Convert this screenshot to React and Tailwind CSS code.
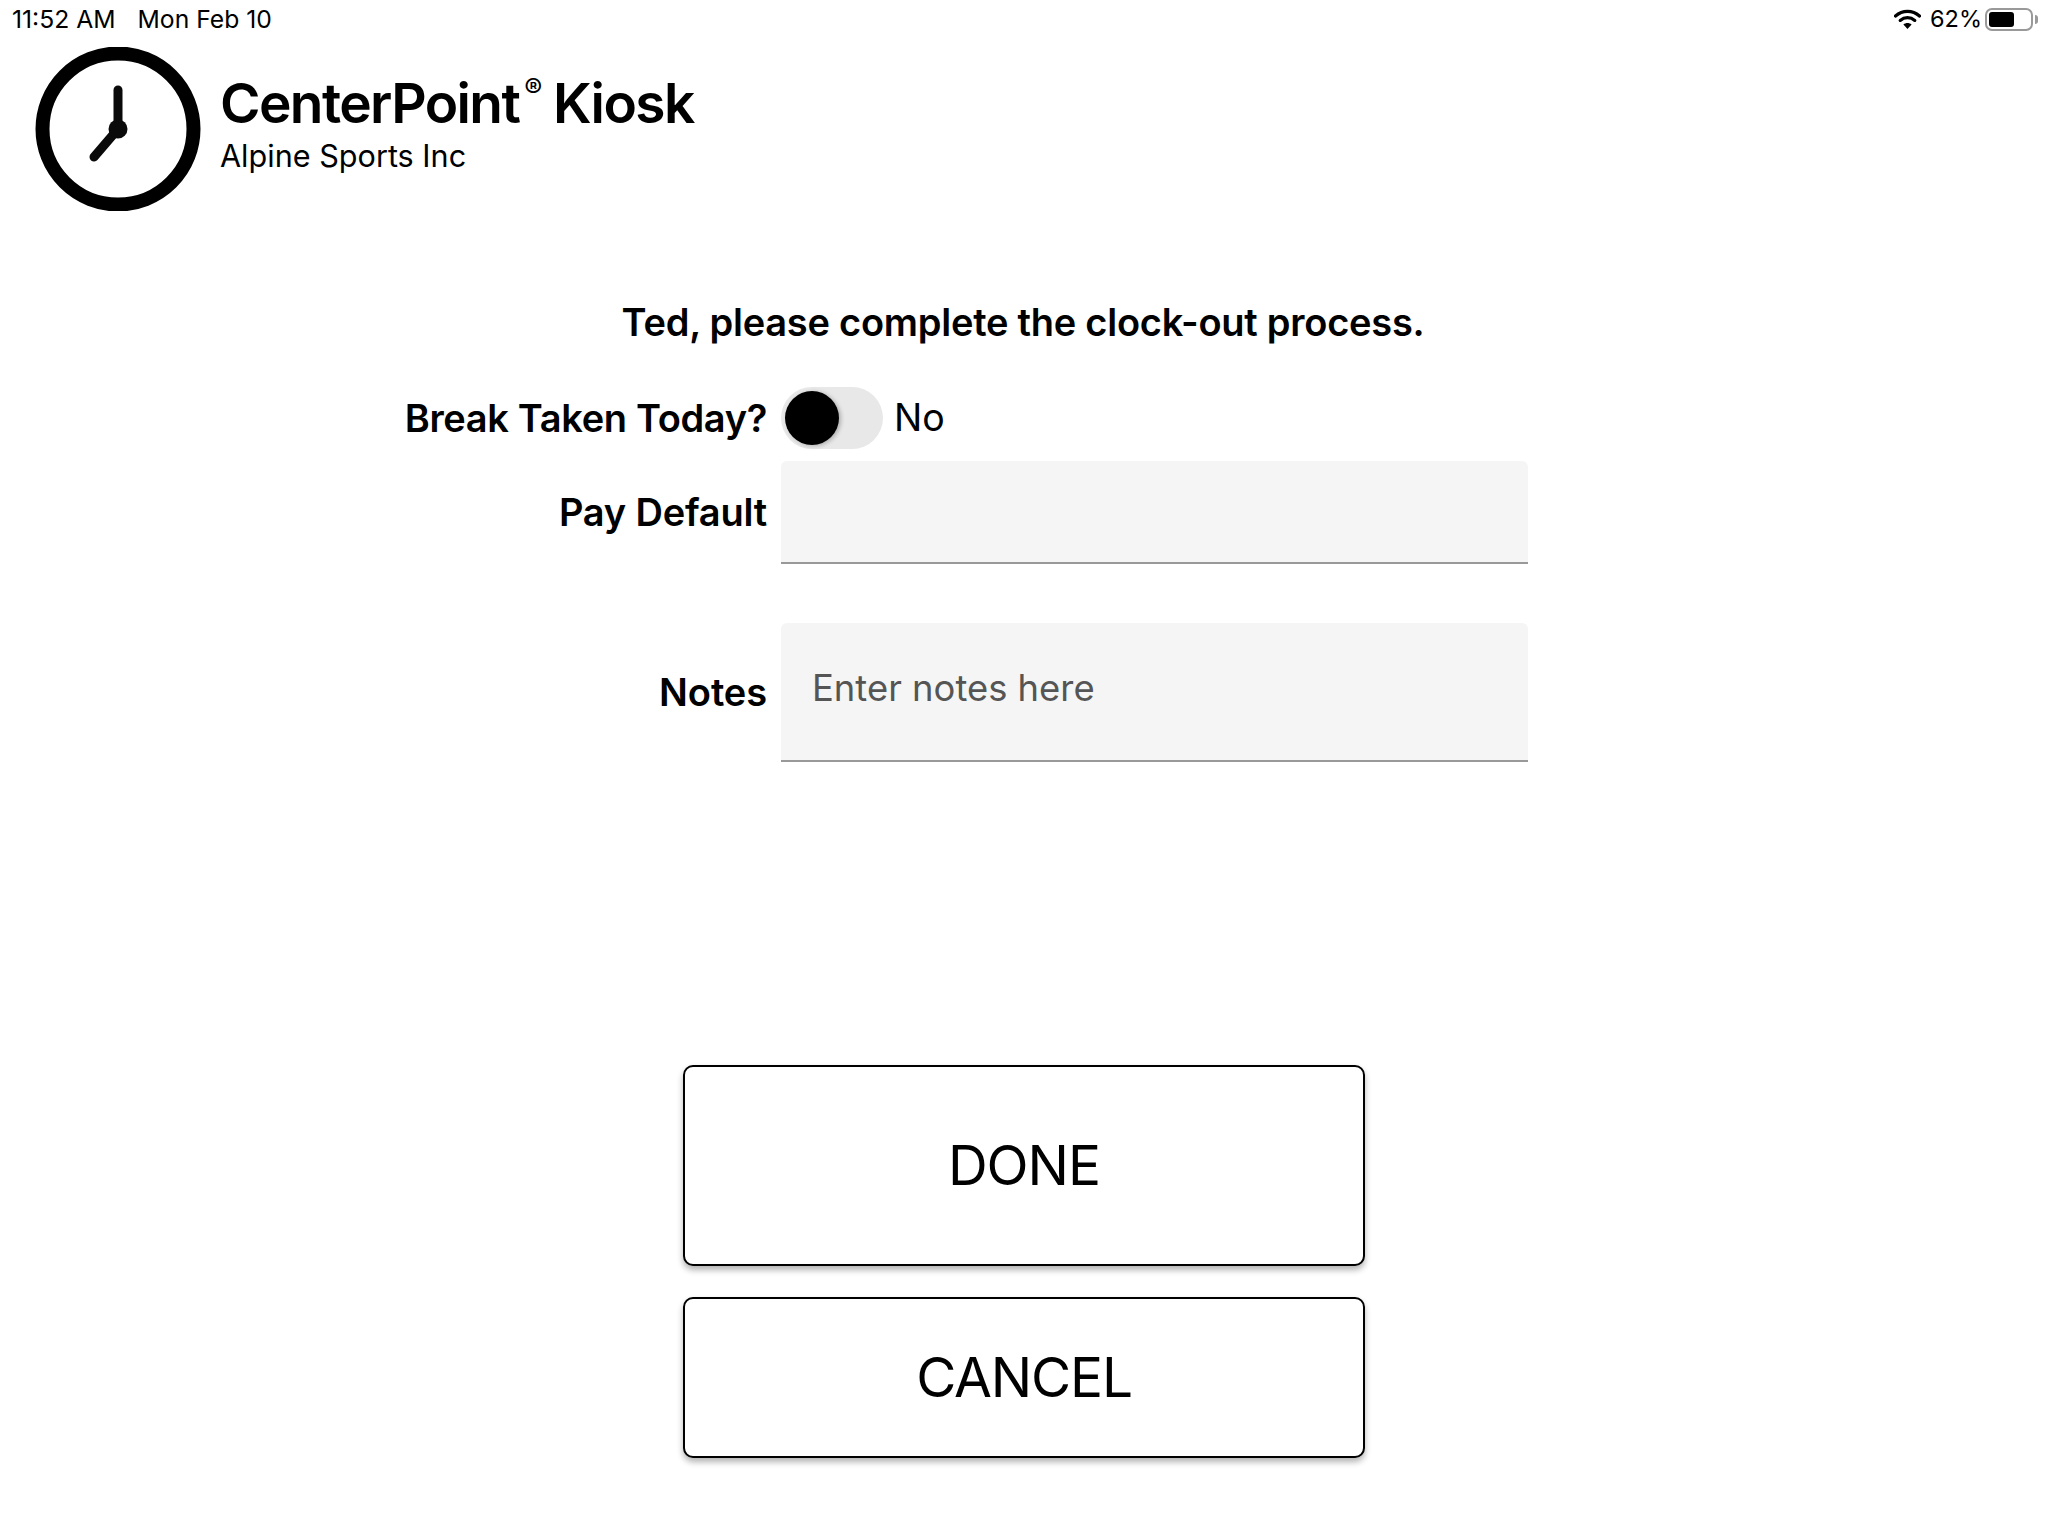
import React from 'react'

function ClockLogo() {
  return (
    <svg className="w-[166px] h-[164px] shrink-0" viewBox="0 0 166 164" fill="none">
      <ellipse cx="83" cy="82" rx="75.5" ry="75.5" stroke="#000" strokeWidth="14" />
      <path d="M83 43V82L59 110" stroke="#0a0a0a" strokeWidth="9" strokeLinecap="round" strokeLinejoin="round" />
      <circle cx="83" cy="82" r="9.5" fill="#0a0a0a" />
    </svg>
  )
}

function WifiIcon() {
  return (
    <svg className="w-[27px] h-[20px]" viewBox="0 0 27 20" fill="none">
      <path d="M1.5 7C8.5 .8 18.5 .8 25.5 7" stroke="#000" strokeWidth="3.2" strokeLinecap="round" />
      <path d="M6.2 11.4C10.5 7.8 16.5 7.8 20.8 11.4" stroke="#000" strokeWidth="3.2" strokeLinecap="round" />
      <path d="M9.4 15.4C11.8 13.4 15.2 13.4 17.6 15.4L13.5 20Z" fill="#000" />
    </svg>
  )
}

function Battery() {
  return (
    <div className="flex items-center gap-[2px]">
      <div className="w-[48px] h-[23px] border-2 border-[#999] rounded-[7px] p-[2px]">
        <div className="w-[25px] h-full bg-black rounded-[3px]"></div>
      </div>
      <div className="w-[3px] h-[9px] bg-[#999] rounded-r-full"></div>
    </div>
  )
}

export default function App() {
  return (
    <div className="w-[2048px] h-[1536px] bg-white text-black font-['Inter','Liberation_Sans',sans-serif] overflow-hidden">
      {/* Status bar */}
      <div className="h-[38px] flex items-center justify-between pl-[12px] pr-[10px] text-[24.7px] leading-none">
        <div className="flex gap-[22px]">
          <span>11:52 AM</span>
          <span>Mon Feb 10</span>
        </div>
        <div className="flex items-center">
          <WifiIcon />
          <span className="ml-[9px] mr-[3px] text-[23.5px]">62%</span>
          <Battery />
        </div>
      </div>

      {/* Header */}
      <div className="flex items-center pl-[35px] mt-[9px]">
        <ClockLogo />
        <div className="ml-[19px] -mt-[13px]">
          <h1 className="text-[55px] leading-[64px] font-semibold tracking-[-1.6px]">
            CenterPoint<sup className="text-[27px] font-normal top-[-25px] ml-[5px]">®</sup> Kiosk
          </h1>
          <p className="mt-[3px] text-[30.6px] leading-[36px]">Alpine Sports Inc</p>
        </div>
      </div>

      {/* Form */}
      <h2 className="mt-[86px] text-center text-[38px] leading-[50px] font-semibold tracking-[-0.25px] pr-[2px]">
        Ted, please complete the clock-out process.
      </h2>
      <div className="mt-[40px] grid grid-cols-[767px_747px] gap-x-[14px] items-center">
        <label className="text-right text-[38px] font-semibold leading-[62px] tracking-[-0.35px]">Break Taken Today?</label>
        <div className="flex items-center h-[62px]">
          <div className="w-[102px] h-[62px] rounded-full bg-[#e8e8e8] flex items-center pl-[4px]">
            <div className="w-[54px] h-[54px] rounded-full bg-black shadow-[2px_1px_4px_rgba(0,0,0,0.25)]"></div>
          </div>
          <span className="ml-[11px] text-[37.5px]">No</span>
        </div>

        <label className="mt-[12px] text-right text-[38px] font-semibold tracking-[-0.2px]">Pay Default</label>
        <div className="mt-[12px] h-[103px] bg-[#f5f5f5] rounded-t-[6px] border-b-2 border-[#999]"></div>

        <label className="mt-[59px] text-right text-[38px] font-semibold tracking-[-0.1px]">Notes</label>
        <div className="mt-[59px] h-[139px] bg-[#f5f5f5] rounded-t-[6px] border-b-2 border-[#999] pl-[31px] pt-[40px] text-[36.4px] leading-[50px] text-[#555]">
          Enter notes here
        </div>
      </div>

      {/* Buttons */}
      <div className="mt-[303px] flex flex-col items-center gap-[31px]">
        <button className="w-[682px] h-[201px] bg-white border-2 border-black rounded-[10px] shadow-[0_4px_6px_rgba(0,0,0,0.3)] text-[55px] leading-none tracking-[-1px]">
          DONE
        </button>
        <button className="w-[682px] h-[161px] bg-white border-2 border-black rounded-[10px] shadow-[0_4px_6px_rgba(0,0,0,0.3)] text-[55px] leading-none tracking-[-1.2px]">
          CANCEL
        </button>
      </div>
    </div>
  )
}
